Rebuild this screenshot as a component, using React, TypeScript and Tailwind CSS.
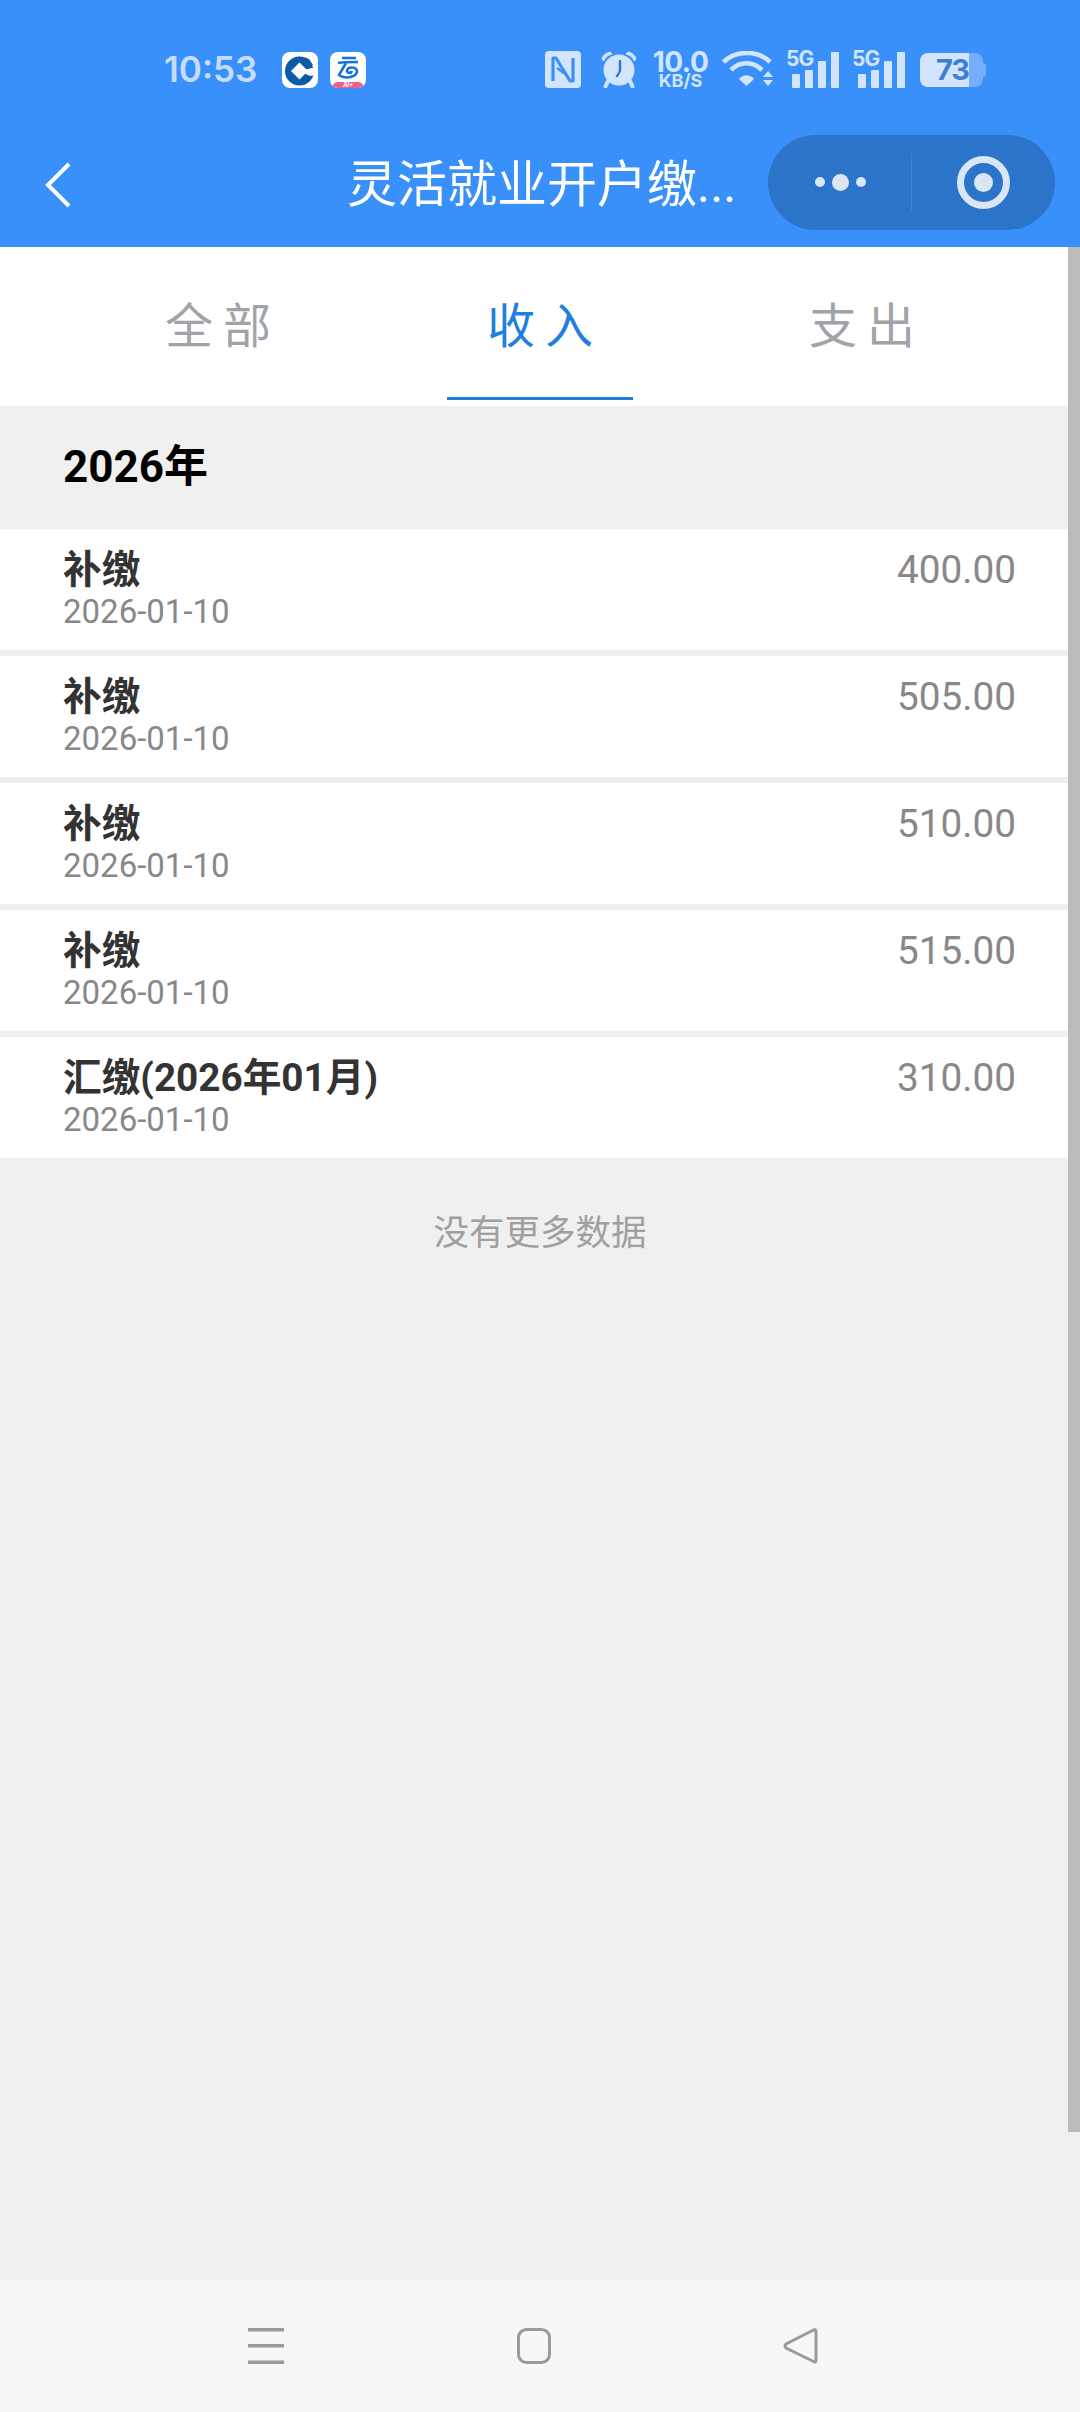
const records = [
  { title: '补缴', date: '2026-01-10', amount: '400.00' },
  { title: '补缴', date: '2026-01-10', amount: '505.00' },
  { title: '补缴', date: '2026-01-10', amount: '510.00' },
  { title: '补缴', date: '2026-01-10', amount: '515.00' },
  { title: '汇缴(2026年01月)', date: '2026-01-10', amount: '310.00' },
];

const tabs = ['全部', '收入', '支出'];

function NfcIcon() {
  return (
    <svg width="36" height="37" viewBox="0 0 36 37" className="shrink-0">
      <rect width="36" height="37" rx="4" fill="#d3e5fc" />
      <path d="M8 30V7h3l14 23h3V7" fill="none" stroke="#3a90fb" strokeWidth="3.2" strokeLinejoin="round" />
      <path d="M12 17l11 8" fill="none" stroke="#3a90fb" strokeWidth="2.6" />
    </svg>
  );
}

function AlarmIcon() {
  return (
    <svg width="38" height="37" viewBox="0 0 38 37" className="shrink-0">
      <circle cx="19" cy="19" r="15.5" fill="#d3e5fc" />
      <path d="M2 8 C3 4 6 2 10 1 L12 3 C8 4 5 6 4 10 Z M36 8 C35 4 32 2 28 1 L26 3 C30 4 33 6 34 10 Z" fill="#d3e5fc" stroke="#d3e5fc" strokeWidth="1" />
      <path d="M8 30l-2.5 5.5M30 30l2.5 5.5" stroke="#d3e5fc" strokeWidth="4" strokeLinecap="round" />
      <path d="M20 9v11l-3.5 6" fill="none" stroke="#2f78d0" strokeWidth="2.4" />
    </svg>
  );
}

function WifiIcon() {
  return (
    <svg width="52" height="37" viewBox="0 0 52 37" className="shrink-0">
      <path d="M1.5 11 C14 -1 36 -1 48 11" fill="none" stroke="#d3e5fc" strokeWidth="4.6" />
      <path d="M9 19 C18 10 31 10 40 19" fill="none" stroke="#d3e5fc" strokeWidth="4.6" />
      <path d="M17 28 C21 23 28 23 32 28 L24.5 35 Z" fill="#d3e5fc" />
      <path d="M46 20l5 6h-10zM46 35l5-6h-10z" fill="#d3e5fc" />
    </svg>
  );
}

function SignalIcon() {
  return (
    <div className="relative w-[52px] h-[37px] shrink-0">
      <span className="absolute left-0 top-[-2px] text-[21px] leading-[20px] font-bold tracking-[-1px] text-[#d3e5fc]">5G</span>
      <div className="absolute left-[6px] bottom-0 flex items-end gap-[5.5px]">
        <div className="w-[7.5px] h-[14px] rounded-[1px] bg-[#d3e5fc]" />
        <div className="w-[7.5px] h-[18px] rounded-[1px] bg-[#d3e5fc]" />
        <div className="w-[7.5px] h-[27px] rounded-[1px] bg-[#d3e5fc]" />
        <div className="w-[7.5px] h-[36px] rounded-[1px] bg-[#d3e5fc]" />
      </div>
    </div>
  );
}

function CcbIcon() {
  return (
    <div className="w-[36px] h-[36px] rounded-[8px] bg-white flex items-center justify-center shrink-0">
      <svg width="32" height="32" viewBox="0 0 32 32">
        <circle cx="15.5" cy="17" r="14.5" fill="#0a5aa6" />
        <path d="M15.5 8.5 L24 17 L15.5 25.5 L7 17 Z" fill="#fff" />
        <path d="M15.5 17 L32 13 L32 21 L26 22 Z" fill="#fff" />
        <path d="M17 0 L21 0 L32 11 L30 14 Z" fill="#fff" />
        <path d="M20 3 L25 5 L29 11 L25 13 Z" fill="#0a5aa6" />
      </svg>
    </div>
  );
}

function CloudAppIcon() {
  return (
    <div className="relative w-[36px] h-[36px] rounded-[8px] bg-white overflow-hidden flex flex-col items-center shrink-0">
      <svg width="24" height="24" viewBox="0 0 24 24" className="mt-[4px]">
        <path d="M6 2h14M2 7 C8 6 16 6 22 6" stroke="#1572dc" strokeWidth="2.5" fill="none" />
        <path d="M10 7 L3 19 C8 23 19 22 21 16 C22 11 13 10 11 14 C10 17 15 18 16 15" stroke="#1572dc" strokeWidth="2.5" fill="none" />
      </svg>
      <div className="absolute bottom-0 left-[2px] right-[2px] h-[6px] bg-[#ec5f8e] rounded-t-[6px] text-white text-[6px] leading-[6px] text-center font-bold italic">AI+</div>
    </div>
  );
}

function StatusBar() {
  return (
    <div className="h-[100px] pt-[51px] pl-[164px] flex items-start font-['Inter',sans-serif] text-[#d3e5fc]">
      <span className="w-[118px] text-[35px] leading-[37px] font-semibold text-[#c5dcfb]">10:53</span>
      <div className="mt-[1px]"><CcbIcon /></div>
      <div className="ml-[12px] mt-[1px]"><CloudAppIcon /></div>
      <div className="ml-[179px] flex items-start">
        <NfcIcon />
        <div className="ml-[19px]"><AlarmIcon /></div>
        <div className="ml-[15px] w-[55px] flex flex-col items-center font-bold">
          <span className="text-[28px] leading-[22px] tracking-[-0.5px]">10.0</span>
          <span className="text-[18px] leading-[15px]">KB/S</span>
        </div>
        <div className="ml-[14px]"><WifiIcon /></div>
        <div className="ml-[12px]"><SignalIcon /></div>
        <div className="ml-[14px]"><SignalIcon /></div>
        <div className="ml-[16px] flex items-center mt-[2px]">
          <div className="relative w-[63px] h-[34px] rounded-[8px] bg-[#75aefc] overflow-hidden">
            <div className="absolute left-0 inset-y-0 w-[49px] bg-[#d3e5fc] text-[#3b7fd8] text-[29px] leading-[34px] font-bold text-right tracking-[-1px]">73</div>
          </div>
          <div className="w-[3px] h-[14px] rounded-r-[3px] bg-[#75aefc]" />
        </div>
      </div>
    </div>
  );
}

function Capsule() {
  return (
    <div className="w-[287px] h-[95px] mb-[6px] rounded-full bg-[#2c74c9] flex items-center shrink-0">
      <div className="w-[144px] flex items-center justify-center gap-[7px] border-r border-[#3f80cf] h-[58px] pl-[2px]">
        <div className="w-[10px] h-[10px] rounded-full bg-[#dbe6f5]" />
        <div className="w-[17px] h-[17px] rounded-full bg-[#dbe6f5]" />
        <div className="w-[10px] h-[10px] rounded-full bg-[#dbe6f5]" />
      </div>
      <div className="flex-1 flex items-center justify-center">
        <div className="w-[53px] h-[53px] rounded-full border-[7px] border-[#dbe6f5] flex items-center justify-center">
          <div className="w-[19px] h-[19px] rounded-full bg-[#dbe6f5]" />
        </div>
      </div>
    </div>
  );
}

function NavBar() {
  return (
    <div className="h-[147px] pt-[23px] flex items-center pl-[45px] text-white">
      <svg width="26" height="46" viewBox="0 0 26 46" className="shrink-0">
        <path d="M24 2 L3 23 L24 44" fill="none" stroke="#fff" strokeWidth="4" />
      </svg>
      <div className="ml-[276px] w-[421px] shrink-0 text-[50px] leading-[60px] whitespace-nowrap">灵活就业开户缴...</div>
      <Capsule />
    </div>
  );
}

function SystemNav() {
  return (
    <div className="h-[132px] bg-[#f7f7f7] flex items-start pt-[48px] pl-[248px]">
      <svg width="36" height="36" viewBox="0 0 36 36" fill="#9a9a9a" className="shrink-0">
        <rect x="0" y="0" width="36" height="3.5" />
        <rect x="0" y="16" width="36" height="3.5" />
        <rect x="0" y="32.5" width="36" height="3.5" />
      </svg>
      <svg width="34" height="36" viewBox="0 0 34 36" className="ml-[233px] shrink-0">
        <rect x="1.5" y="1.5" width="31" height="33" rx="8" fill="none" stroke="#9a9a9a" strokeWidth="3" />
      </svg>
      <svg width="35" height="36" viewBox="0 0 35 36" className="ml-[232px] shrink-0">
        <path d="M33 3.5 V32.5 Q33 35 30.5 33.5 L3 20 Q1 18 3 16 L30.5 2 Q33 1 33 3.5 Z" fill="none" stroke="#9a9a9a" strokeWidth="3" strokeLinejoin="round" />
      </svg>
    </div>
  );
}

export default function App() {
  return (
    <div className="relative w-[1080px] h-[2412px] overflow-hidden bg-[#f0f0f0] flex flex-col font-['Roboto','Noto_Sans_CJK_SC',sans-serif]">
      <div className="bg-[#3a90fb] h-[247px]">
        <StatusBar />
        <NavBar />
      </div>

      <div className="h-[159px] bg-white grid grid-cols-3 pl-[62px] pr-[52px]">
        {tabs.map((tab, i) => (
          <div key={tab} className="relative flex justify-center pt-[46px]">
            <span className={`text-[48px] leading-[68px] tracking-[10px] ${i === 1 ? 'text-[#1e7fe0]' : 'text-[#a0a4a8]'}`}>{tab}</span>
            {i === 1 && <div className="absolute bottom-[6px] left-[63px] w-[186px] h-[3px] bg-[#1e7fe0]" />}
          </div>
        ))}
      </div>

      <div className="h-[123px] pl-[63px] pt-[33px] text-[44px] leading-[56px] font-bold text-black">2026年</div>

      <div className="flex flex-col gap-[6px]">
        {records.map((r, i) => (
          <div key={i} className="h-[121px] bg-white pl-[63px] pr-[64px] pt-[18px] flex justify-between items-start">
            <div className="flex flex-col">
              <span className="text-[38.7px] leading-[46px] font-bold text-[#333]">{r.title}</span>
              <span className="text-[33px] leading-[38px] text-[#888]">{r.date}</span>
            </div>
            <span className="text-[38.7px] leading-[46px] text-[#888]">{r.amount}</span>
          </div>
        ))}
      </div>

      <div className="mt-[51px] flex-1 text-center text-[35.5px] leading-[48px] text-[#a0a0a0]">没有更多数据</div>

      <SystemNav />

      <div className="absolute right-0 top-[247px] w-[12px] h-[1885px] bg-[#bbbbbb]" />
    </div>
  );
}
